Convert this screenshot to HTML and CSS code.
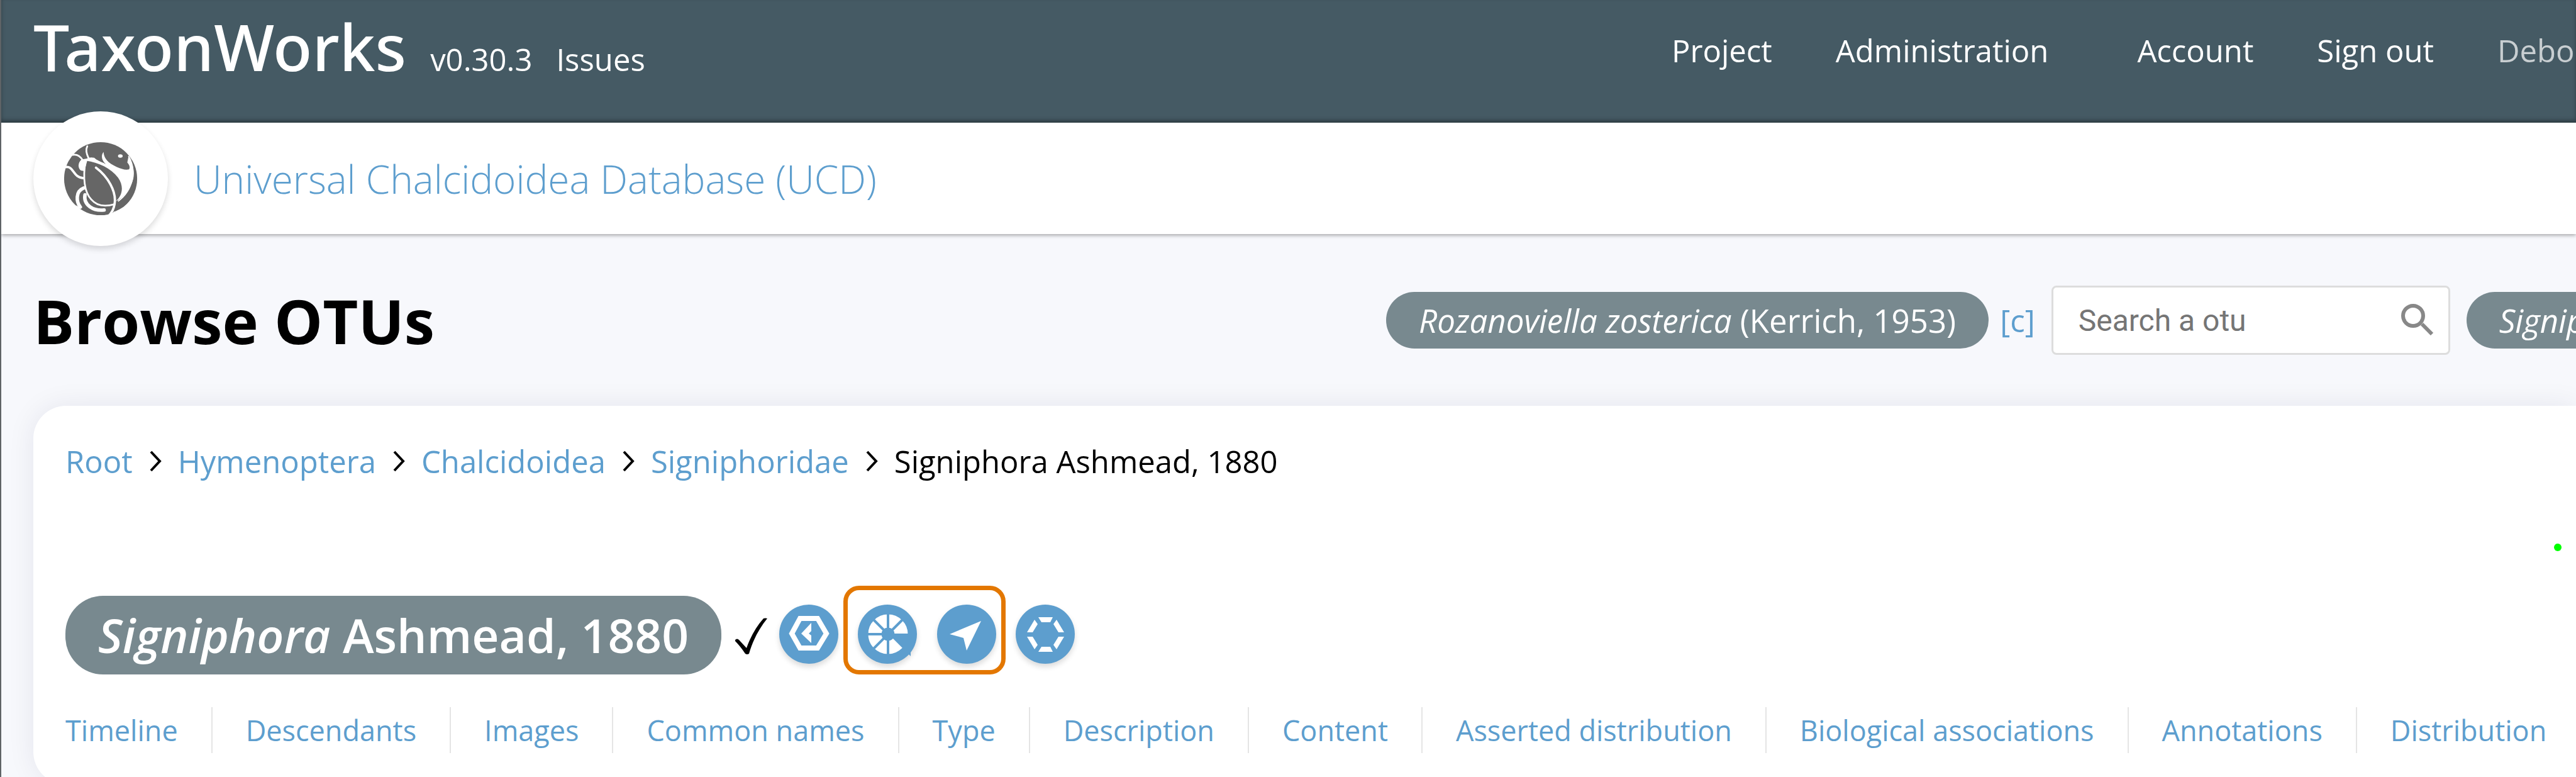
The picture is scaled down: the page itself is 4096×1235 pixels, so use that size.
FILE: index.html
```
<!DOCTYPE html>
<html lang="en">
<head>
    <meta charset="UTF-8">
    <meta name="viewport" content="width=device-width, initial-scale=1.0">
    <title>Browse OTUs - TaxonWorks</title>
    <link rel="stylesheet" href="styles.css">
</head>
<body>
    <header class="header">
        <div class="brand">
            <a class="logo" href="#">TaxonWorks</a>
            <a class="version" href="#">v0.30.3</a>
            <a class="issues" href="#">Issues</a>
        </div>
        <nav class="nav">
            <a href="#">Project</a>
            <a class="nav-wide" href="#">Administration</a>
            <a href="#">Account</a>
            <a href="#">Sign out</a>
            <a class="user" href="#">Deborah</a>
        </nav>
    </header>

    <!-- Current project -->
    <div class="project-bar">
        <a class="project-badge" href="#" aria-label="Project home">
            <svg viewBox="0 0 128 128">
                <circle cx="64" cy="64" r="63" fill="#666"/>
                <g fill="#fff">
                    <path d="M39 33 C60 36 82 46 94 62 C106 79 100 95 90 103 C104 97 118 79 122 58 C122 46 117 34 112 26 L110 36 Q116 43 113 48 Q105 50 92 44 C80 38 70 32 69 18 C64 24 66 33 73 39 C66 35 58 33 53 28 Q45 26 39 30 Z"/>
                    <path d="M42 29 L31 31 C25 36 24 45 30 50 L36 51 Z"/>
                    <ellipse cx="98" cy="25" rx="4" ry="3"/>
                    <path d="M76 130 L88 120 Q104 116 116 100 L130 130 Z"/>
                    <path d="M22 110 L28 114 L20 124 Z"/>
                </g>
                <g fill="none" stroke="#fff" stroke-linecap="round">
                    <path d="M41 8 Q37 16 43 28" stroke-width="3"/>
                    <path d="M16 23 Q26 21 33 32" stroke-width="3"/>
                    <path d="M4 44 C18 42 16 62 34 63" stroke-width="4"/>
                    <path d="M38 34 C33 62 36 88 48 100 C58 112 74 112 88 108" stroke-width="3"/>
                    <path d="M35 80 C20 86 22 104 29 113" stroke-width="6"/>
                    <path d="M37 92 C34 110 52 120 70 118" stroke-width="6"/>
                    <path d="M56 45 C76 60 92 86 88 108 Q86 120 78 128" stroke-width="4"/>
                </g>
                <path d="M112 25 C128 48 124 84 94 104 L88 121 C126 104 138 56 112 25 Z" fill="#666"/>
                <path d="M112 25 C127 50 120 84 94 103" fill="none" stroke="#fff" stroke-width="2"/>
            </svg>
        </a>
        <a class="project-name" href="#">Universal Chalcidoidea Database (UCD)</a>
    </div>

    <main class="page">
        <div class="page-head">
            <h1>Browse OTUs</h1>
            <div class="otu-nav">
                <a class="pill" href="#"><i>Rozanoviella zosterica</i> (Kerrich, 1953)</a>
                <a class="cite" href="#">[c]</a>
                <div class="search">
                    <input type="text" placeholder="Search a otu" aria-label="Search a otu">
                    <svg viewBox="0 0 54 50">
                        <circle cx="20" cy="19" r="16" fill="none" stroke="#888" stroke-width="6"/>
                        <path d="M34 32 L50 48" stroke="#888" stroke-width="6"/>
                    </svg>
                </div>
                <a class="pill" href="#"><i>Signiphorina</i></a>
            </div>
        </div>

        <section class="card">
            <nav class="breadcrumb" aria-label="Breadcrumb">
                <a href="#">Root</a>
                <svg viewBox="0 0 20 36"><path d="M3 3 L17 18 L3 33"/></svg>
                <a href="#">Hymenoptera</a>
                <svg viewBox="0 0 20 36"><path d="M3 3 L17 18 L3 33"/></svg>
                <a href="#">Chalcidoidea</a>
                <svg viewBox="0 0 20 36"><path d="M3 3 L17 18 L3 33"/></svg>
                <a href="#">Signiphoridae</a>
                <svg viewBox="0 0 20 36"><path d="M3 3 L17 18 L3 33"/></svg>
                <span>Signiphora Ashmead, 1880</span>
            </nav>

            <div class="taxon">
                <h2 class="taxon-name"><i>Signiphora</i> Ashmead, 1880</h2>
                <svg class="check" viewBox="0 0 52 58"><path d="M0 35 Q3 32 6 35 L18 48 Q28 20 45 1 Q48 0 51 1 C38 17 28 36 22 57 Q19 59 16 57 Q8 45 0 37 Z"/></svg>
                <button type="button" class="round" aria-label="Browse nomenclature">
                    <svg viewBox="0 0 94 94">
                        <path d="M33 22 H61 L75 46 L61 69 H33 L20 46 Z" fill="none" stroke="#fff" stroke-width="8"/>
                        <path d="M51 29 V42 L47 46 L51 49 V61 L35 46 Z" fill="#fff"/>
                    </svg>
                </button>
                <div class="highlight">
                    <button type="button" class="round" aria-label="Filter">
                        <svg viewBox="0 0 94 94">
                            <circle cx="48" cy="47" r="21" fill="none" stroke="#fff" stroke-width="21"/>
                            <path d="M48 46 H84 V82 Z" fill="#5d9ece"/>
                            <path d="M48 10 V84 M12 47 H48 M22 21 L48 47 L22 73 M48 47 L74 21" fill="none" stroke="#5d9ece" stroke-width="4"/>
                        </svg>
                    </button>
                    <button type="button" class="round" aria-label="Locate">
                        <svg viewBox="0 0 94 94">
                            <path d="M70 26 L47 73 L42 53 L20 47 Z" fill="#fff"/>
                        </svg>
                    </button>
                </div>
                <button type="button" class="round" aria-label="Radial object">
                    <svg viewBox="0 0 94 94">
                        <path d="M36 20 H59 L55 28 H41 Z M36 75 H59 L55 67 H41 Z M30 24 L18 44 H27 L35 31 Z M65 24 L77 44 H68 L60 31 Z M18 51 L30 71 L35 64 L27 51 Z M77 51 L65 71 L60 64 L68 51 Z" fill="#fff"/>
                    </svg>
                </button>
            </div>

            <nav class="tabs">
                <a href="#">Timeline</a>
                <a href="#">Descendants</a>
                <a href="#">Images</a>
                <a href="#">Common names</a>
                <a href="#">Type</a>
                <a href="#">Description</a>
                <a href="#">Content</a>
                <a href="#">Asserted distribution</a>
                <a href="#">Biological associations</a>
                <a href="#">Annotations</a>
                <a href="#">Distribution</a>
            </nav>
            <span class="status-dot"></span>
        </section>
    </main>
</body>
</html>
```
FILE: styles.css
```
/* Base */
* {
    box-sizing: border-box;
}

html {
    overflow: hidden;
}

body {
    margin: 0;
    font-family: 'Open Sans', 'Noto Sans', sans-serif;
    font-size: 49px;
    line-height: 68px;
    color: #000;
    background: #f7f8fc;
    border-left: 2px solid #5f6366;
    white-space: nowrap;
}

a {
    color: #5d9ece;
    text-decoration: none;
}

/* Header */
.header {
    display: flex;
    justify-content: space-between;
    height: 195px;
    padding: 0 0 0 51px;
    background: #455a64;
    box-shadow: inset 0 -4px 6px rgba(0, 0, 0, 0.3);
}

.header a {
    color: #fff;
}

.brand {
    display: flex;
    align-items: baseline;
    gap: 38px;
}

.header .logo {
    font-family: 'Noto Sans', sans-serif;
    font-size: 102px;
    font-weight: 500;
    line-height: 148px;
}

.nav {
    display: flex;
    gap: 101px;
    width: 1438px;
    padding-top: 46px;
    overflow: hidden;
}

.nav .nav-wide {
    margin-right: 40px;
}

.header .user {
    color: #c8ced1;
}

/* Project bar */
.project-bar {
    display: flex;
    align-items: center;
    gap: 41px;
    height: 177px;
    padding-left: 51px;
    background: #fff;
    box-shadow: 0 2px 6px rgba(0, 0, 0, 0.35);
}

.project-badge {
    display: flex;
    align-items: center;
    justify-content: center;
    width: 214px;
    height: 214px;
    border-radius: 50%;
    background: #fff;
    box-shadow: 0 5px 10px rgba(0, 0, 0, 0.14);
}

.project-badge svg {
    width: 118px;
    height: 118px;
}

.project-name {
    font-size: 62px;
    font-weight: 300;
}

/* Page head */
.page {
    padding: 82px 0 0 51px;
}

.page-head {
    display: flex;
    align-items: center;
    justify-content: space-between;
    height: 110px;
}

h1 {
    margin: 0;
    font-size: 97px;
    font-weight: 700;
}

.otu-nav {
    display: flex;
    align-items: center;
    width: 1892px;
    height: 110px;
    overflow: hidden;
}

.pill {
    flex: none;
    height: 90px;
    padding: 0 52px;
    border-radius: 45px;
    background: #78898f;
    color: #fff;
    font-size: 51px;
    line-height: 90px;
}

.cite {
    margin: 0 26px 0 18px;
}

.search {
    position: relative;
    flex: none;
    width: 634px;
    margin-right: 26px;
}

.search input {
    width: 100%;
    height: 110px;
    padding: 0 40px;
    border: 3px solid #ddd;
    border-radius: 8px;
    background: #fff;
    font-family: Roboto, sans-serif;
    font-size: 48px;
}

.search input::placeholder {
    color: #757575;
}

.search svg {
    position: absolute;
    top: 29px;
    right: 25px;
    width: 54px;
    height: 50px;
}

/* Card */
.card {
    position: relative;
    margin-top: 81px;
    padding: 54px 0 50px 51px;
    border-radius: 52px 0 0 52px;
    background: #fff;
    box-shadow: 0 0 44px rgba(30, 30, 60, 0.08);
}

.breadcrumb {
    display: flex;
    align-items: center;
    gap: 26px;
    height: 68px;
}

.breadcrumb svg {
    width: 20px;
    height: 36px;
    fill: none;
    stroke: #000;
    stroke-width: 4;
}

.taxon {
    display: flex;
    align-items: flex-end;
    margin-top: 164px;
}

.taxon-name {
    height: 125px;
    margin: 0 22px 0 0;
    padding: 0 52px;
    border-radius: 60px;
    background: #78898f;
    color: #fff;
    font-size: 75px;
    font-weight: 600;
    line-height: 125px;
}

.check {
    width: 52px;
    height: 58px;
    margin: 0 18px 32px 0;
}

.round {
    width: 94px;
    height: 94px;
    margin-bottom: 17px;
    padding: 0;
    border: 0;
    border-radius: 50%;
    background: #5d9ece;
    box-shadow: 0 5px 8px rgba(0, 0, 0, 0.14);
}

.round svg {
    display: block;
}

.highlight {
    display: flex;
    gap: 32px;
    margin: 0 16px 0 8px;
    padding: 23px 8px 10px 16px;
    border: 7px solid #e37700;
    border-radius: 25px;
}

.highlight .round {
    margin-bottom: 0;
}

/* Tabs */
.tabs {
    display: flex;
    margin-top: 52px;
    font-size: 45px;
    line-height: 73px;
}

.tabs a {
    padding: 0 53px;
    border-right: 2px solid #e5e5e5;
}

.tabs a:first-child {
    padding-left: 0;
}

.tabs a:last-child {
    padding-right: 0;
    border-right: 0;
}

.status-dot {
    position: absolute;
    top: 219px;
    right: 23px;
    width: 12px;
    height: 12px;
    border-radius: 50%;
    background: #0f0;
}
```
